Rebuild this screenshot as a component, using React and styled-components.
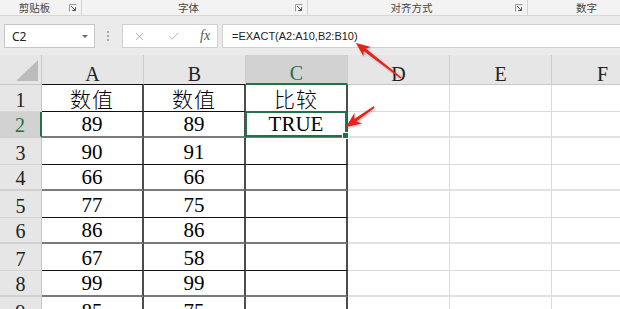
import React from "react";
import styled, { createGlobalStyle } from "styled-components";
import { X, Check } from "lucide-react";

const GREEN = "#217346";
const SERIF = `"Liberation Serif", "Times New Roman", serif`;
const CJK = `"Noto Sans CJK SC", sans-serif`;
const UI = `"Noto Sans", "Noto Sans CJK SC", sans-serif`;

const GlobalStyle = createGlobalStyle`
  html, body { margin: 0; padding: 0; background: #fff; }
  body { overflow: hidden; font-family: ${UI}; }
`;

const Page = styled.div`
  position: relative;
  width: 620px;
  height: 309px;
  overflow: hidden;
  background: #fff;
`;

/* ribbon group captions */
const Ribbon = styled.div`
  display: flex;
  height: 15px;
  background: #f3f3f3;
  border-bottom: 1px solid #d6d6d6;
`;

const Group = styled.div`
  display: flex;
  align-items: flex-start;
  flex: 0 0 ${(p) => p.w}px;
  box-sizing: border-box;
  border-right: 1px solid #d4d4d4;
`;

const GroupLabel = styled.span`
  flex: 1;
  text-align: center;
  font-family: ${CJK};
  font-size: 10.5px;
  line-height: 15px;
  color: #444;
`;

const Launcher = styled.svg`
  width: 8px;
  height: 8px;
  margin: 4px 4px 0 0;
  flex: none;
`;

/* formula bar */
const FormulaArea = styled.div`
  display: flex;
  align-items: center;
  height: 39px;
  box-sizing: border-box;
  padding: 8px 0 7px 4px;
  background: #ebebeb;
`;

const NameBox = styled.div`
  flex: 0 0 91px;
  height: 24px;
  box-sizing: border-box;
  display: flex;
  align-items: center;
  justify-content: space-between;
  padding: 0 6px 0 7px;
  background: #fff;
  border: 1px solid #c6c6c6;
  font-size: 12px;
  color: #222;
`;

const Caret = styled.span`
  width: 0;
  height: 0;
  border-left: 3px solid transparent;
  border-right: 3px solid transparent;
  border-top: 3px solid #6b6b6b;
`;

const Dots = styled.div`
  display: flex;
  flex-direction: column;
  gap: 2px;
  margin: 0 13px 0 12px;
  span {
    width: 2px;
    height: 2px;
    background: #a8a8a8;
  }
`;

const FxBox = styled.div`
  flex: 0 0 96px;
  height: 24px;
  box-sizing: border-box;
  display: flex;
  align-items: center;
  gap: 21px;
  padding-left: 10px;
  background: #fff;
  border: 1px solid #d0d0d0;
  color: #a6a6a6;
`;

const Fx = styled.i`
  font-family: ${SERIF};
  font-size: 14px;
  color: #555;
  margin-left: -1px;
`;

const FormulaInput = styled.div`
  flex: 0 0 420px;
  height: 24px;
  box-sizing: border-box;
  margin-left: 4px;
  padding-left: 9px;
  display: flex;
  align-items: center;
  background: #fff;
  border: 1px solid #d0d0d0;
  font-family: "Liberation Sans", Arial, sans-serif;
  font-size: 11px;
  color: #222;
`;

/* sheet */
const Sheet = styled.div`
  display: grid;
  grid-template-columns: 42px repeat(6, 102px);
  width: max-content;
`;

const Corner = styled.div`
  height: 30px;
  box-sizing: border-box;
  display: flex;
  align-items: flex-end;
  justify-content: flex-end;
  padding: 0 3px 3px 0;
  background: #e6e6e6;
  border-right: 1px solid #c8c8c8;
  border-bottom: 1px solid #c8c8c8;
`;

const ColHead = styled.div`
  height: 30px;
  box-sizing: border-box;
  display: flex;
  align-items: flex-end;
  justify-content: center;
  font-family: ${SERIF};
  font-size: 20px;
  line-height: 1;
  background: ${(p) => (p.active ? "#d2d2d2" : "#e6e6e6")};
  color: ${(p) => (p.active ? GREEN : "#222")};
  border-right: 1px solid #cdcdcd;
  border-bottom: ${(p) => (p.active ? `2px solid ${GREEN}` : `1px solid ${p.edge}`)};
`;

const RowHead = styled.div`
  height: ${(p) => p.h}px;
  box-sizing: border-box;
  display: flex;
  align-items: flex-end;
  justify-content: center;
  padding-bottom: 1px;
  font-family: ${SERIF};
  font-size: 20px;
  line-height: 1;
  background: ${(p) => (p.active ? "#d2d2d2" : "#e6e6e6")};
  color: ${(p) => (p.active ? GREEN : "#222")};
  border-right: ${(p) => (p.active ? `2px solid ${GREEN}` : "1px solid #c8c8c8")};
  border-bottom: ${(p) => (p.thick ? "2px solid #d0d0d0" : "1px solid #d6d6d6")};
`;

const Cell = styled.div`
  position: relative;
  height: ${(p) => p.h}px;
  box-sizing: border-box;
  display: flex;
  align-items: flex-end;
  justify-content: center;
  padding-bottom: ${(p) => (p.cjk ? 2 : 1)}px;
  font-family: ${(p) => (p.cjk ? CJK : SERIF)};
  font-size: 21px;
  font-weight: ${(p) => (p.cjk ? 300 : 400)};
  letter-spacing: ${(p) => (p.cjk ? "1px" : "0")};
  line-height: 1;
  color: #000;
  border-right: ${(p) => (p.boxed ? "2px solid #4d4d4d" : "1px solid #dadada")};
  border-bottom: ${(p) =>
    p.boxed
      ? p.thick
        ? "2px solid #7a7a7a"
        : "1px solid #111"
      : p.thick
      ? "2px solid #e2e2e2"
      : "1px solid #dadada"};
`;

const Selection = styled.div`
  position: absolute;
  left: -1px;
  top: -1px;
  right: -1px;
  bottom: -1px;
  border: 2px solid ${GREEN};
  z-index: 2;
  pointer-events: none;
`;

const FillHandle = styled.div`
  position: absolute;
  right: -4px;
  bottom: -4px;
  width: 5px;
  height: 5px;
  background: ${GREEN};
  border: 1px solid #fff;
`;

const ArrowLayer = styled.svg`
  position: absolute;
  left: 0;
  top: 0;
  width: 620px;
  height: 309px;
  pointer-events: none;
  filter: drop-shadow(1px 1px 1px rgba(0, 0, 0, 0.3));
  z-index: 5;
`;

const groups = [
  { label: "剪贴板", w: 82 },
  { label: "字体", w: 226 },
  { label: "对齐方式", w: 220 },
  { label: "数字", w: 130 },
];

const cols = ["A", "B", "C", "D", "E", "F"];

const rows = [
  ["数值", "数值", "比较"],
  ["89", "89", "TRUE"],
  ["90", "91", ""],
  ["66", "66", ""],
  ["77", "75", ""],
  ["86", "86", ""],
  ["67", "58", ""],
  ["99", "99", ""],
  ["85", "75", ""],
];

function arrowPoints(tail, tip, head = 14, half = 6, back = 11, w1 = 1.6, w0 = 0.8) {
  const dx = tip[0] - tail[0];
  const dy = tip[1] - tail[1];
  const len = Math.hypot(dx, dy);
  const ux = dx / len;
  const uy = dy / len;
  const nx = -uy;
  const ny = ux;
  const at = (d, s) => [tip[0] - ux * d + nx * s, tip[1] - uy * d + ny * s];
  const pts = [
    tip,
    at(head, half),
    at(back, w1),
    [tail[0] + nx * w0, tail[1] + ny * w0],
    [tail[0] - nx * w0, tail[1] - ny * w0],
    at(back, -w1),
    at(head, -half),
  ];
  return pts.map((p) => p.map((v) => v.toFixed(1)).join(",")).join(" ");
}

function LauncherIcon() {
  return (
    <Launcher viewBox="0 0 8 8">
      <path d="M0.5 7.5V0.5H7.5" fill="none" stroke="#9a9a9a" strokeWidth="1" />
      <path d="M2 2L6.5 6.5M6.5 3.2V6.5H3.2" fill="none" stroke="#555" strokeWidth="1" />
    </Launcher>
  );
}

export default function App() {
  return (
    <Page>
      <GlobalStyle />
      <Ribbon>
        {groups.map((g) => (
          <Group key={g.label} w={g.w}>
            <GroupLabel>{g.label}</GroupLabel>
            <LauncherIcon />
          </Group>
        ))}
      </Ribbon>

      <FormulaArea>
        <NameBox>
          <span>C2</span>
          <Caret />
        </NameBox>
        <Dots>
          <span />
          <span />
          <span />
        </Dots>
        <FxBox>
          <X size={13} strokeWidth={1.5} />
          <Check size={13} strokeWidth={1.5} />
          <Fx>fx</Fx>
        </FxBox>
        <FormulaInput>=EXACT(A2:A10,B2:B10)</FormulaInput>
      </FormulaArea>

      <Sheet>
        <Corner>
          <svg width="22" height="21" viewBox="0 0 22 21">
            <polygon points="22,0 22,21 0,21" fill="#bcbcbc" />
          </svg>
        </Corner>
        {cols.map((c, i) => (
          <ColHead key={c} active={c === "C"} edge={i < 2 ? "#111" : "#c8c8c8"}>
            {c}
          </ColHead>
        ))}
        {rows.map((r, ri) => {
          const h = ri % 2 === 0 ? 27 : 26;
          const thick = ri % 2 === 1;
          return (
            <React.Fragment key={ri}>
              <RowHead h={h} thick={thick} active={ri === 1}>
                {ri + 1}
              </RowHead>
              {cols.map((c, ci) => {
                const v = ci < 3 ? r[ci] : "";
                const selected = ri === 1 && ci === 2;
                return (
                  <Cell key={c} h={h} thick={thick} boxed={ci < 3} cjk={ri === 0}>
                    {v}
                    {selected && (
                      <Selection>
                        <FillHandle />
                      </Selection>
                    )}
                  </Cell>
                );
              })}
            </React.Fragment>
          );
        })}
      </Sheet>

      <ArrowLayer viewBox="0 0 620 309">
        <polygon points={arrowPoints([401, 78], [356, 43])} fill="#e8211b" />
        <polygon points={arrowPoints([374, 107], [346, 127], 15, 6.5, 11.5)} fill="#e8211b" />
      </ArrowLayer>
    </Page>
  );
}
